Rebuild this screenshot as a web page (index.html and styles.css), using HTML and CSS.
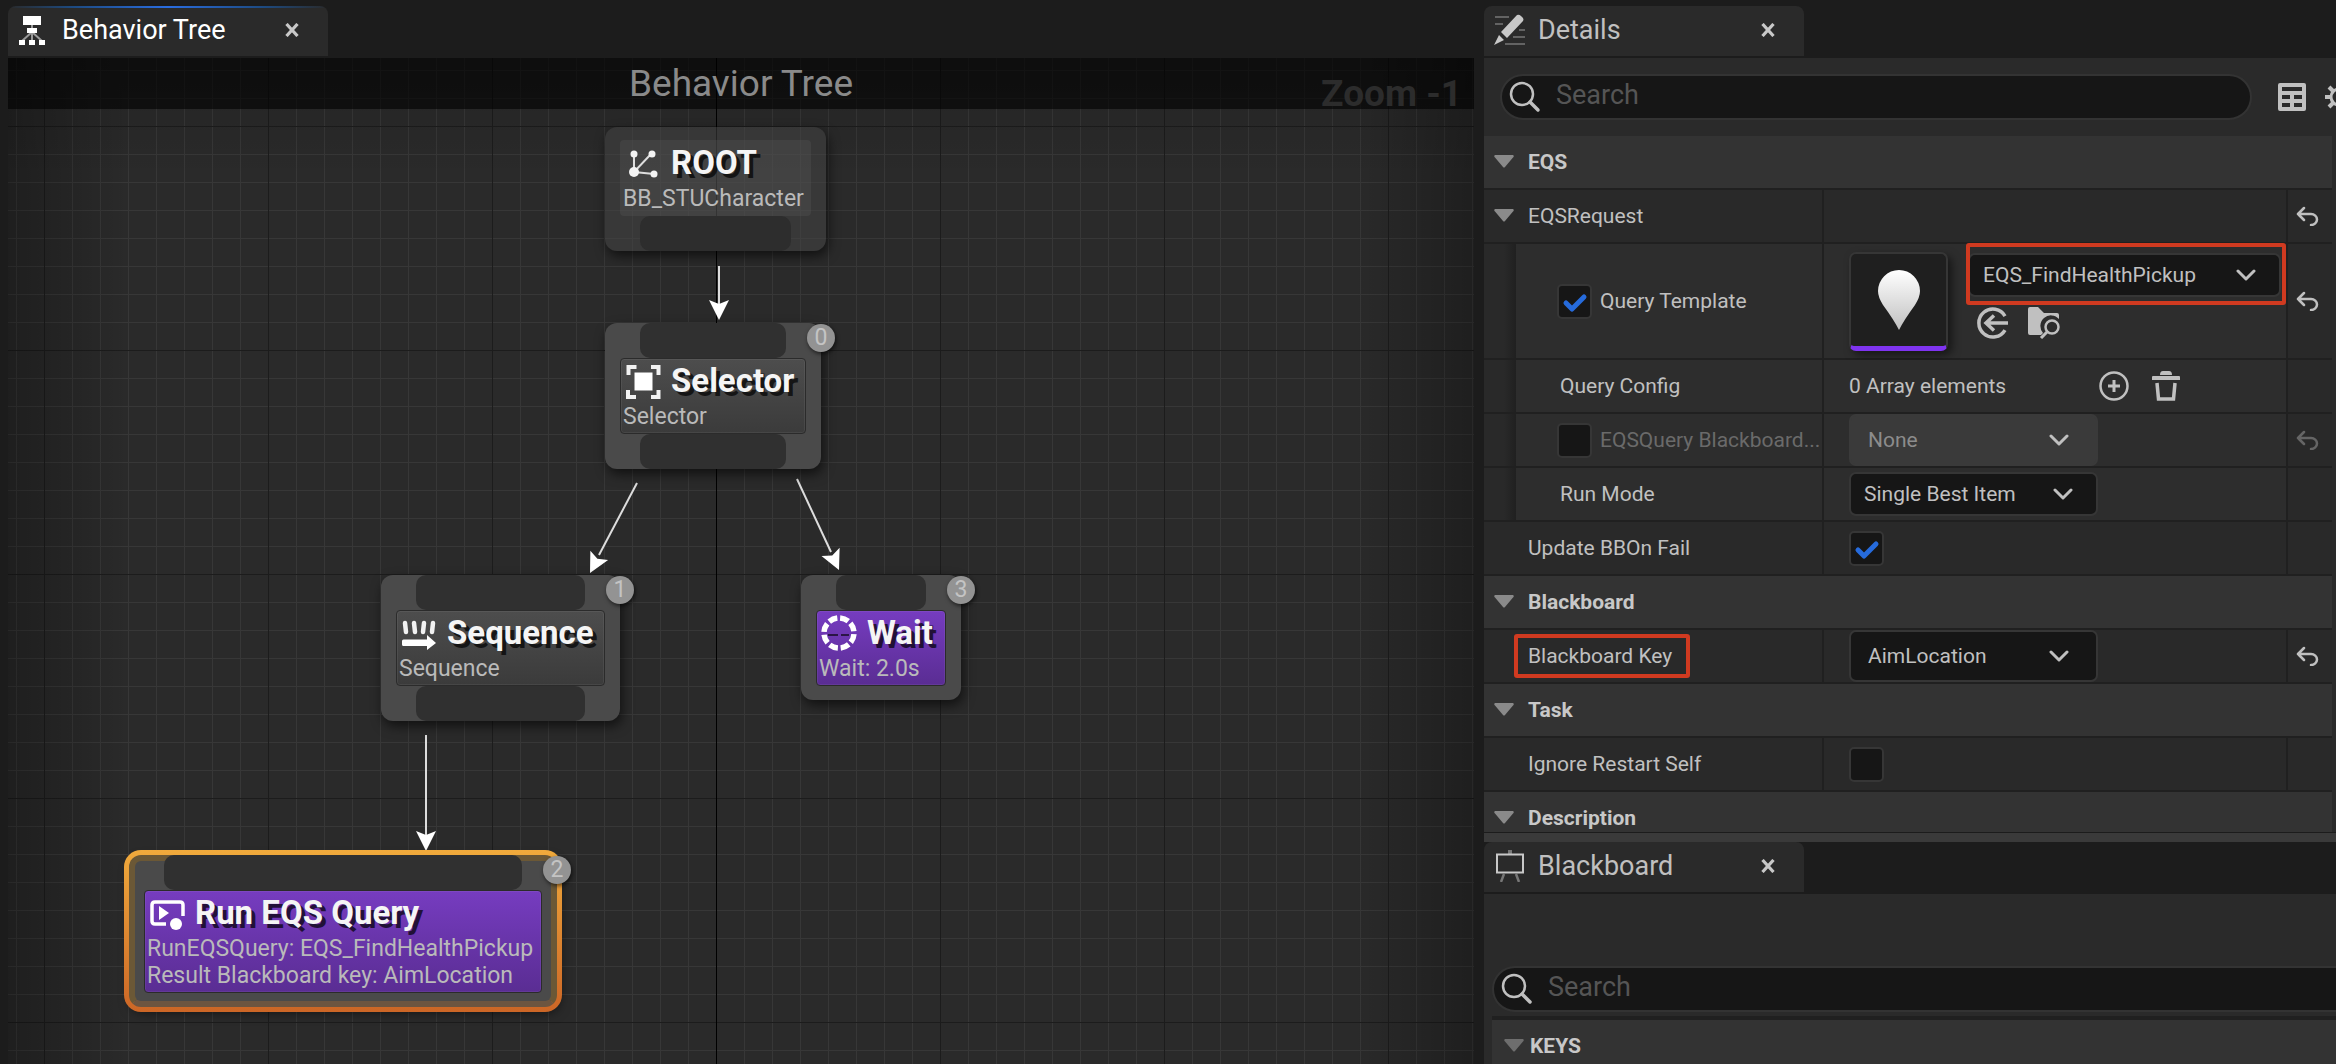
FILE: index.html
```html
<!DOCTYPE html>
<html lang="en">
<head>
  <meta charset="UTF-8">
  <title>Behavior Tree</title>
  <link rel="stylesheet" href="styles.css">
</head>
<body>
  <!-- Shared icons -->
  <svg class="defs" aria-hidden="true">
    <symbol id="i-close" viewBox="0 0 14 14"><path d="M1.500 1L12.500 13M12.500 1L1.500 13" fill="none" stroke="#c8c8c8" stroke-width="3.200"/></symbol>
    <symbol id="i-search" viewBox="0 0 32 32"><circle cx="13" cy="13" r="11" fill="none" stroke="#c0c0c0" stroke-width="2.500"/><path d="M21 21l8 8" stroke="#c0c0c0" stroke-width="3.500" stroke-linecap="round"/></symbol>
    <symbol id="i-reset" viewBox="0 0 24 20"><path d="M8 2L2 8l6 6M2 8h13a6 5.500 0 0 1 0 11" fill="none" stroke="#c0c0c0" stroke-width="2.500" stroke-linecap="round" stroke-linejoin="round"/></symbol>
    <symbol id="i-fold" viewBox="0 0 20 14"><path d="M1 0h18q1.500 1 0 2.500L11 12q-1 1-2 0L1 2.500Q-.5 1 1 0z" fill="currentColor"/></symbol>
  </svg>

  <div class="editor">
    <section class="pane">
      <div class="tabs">
        <div class="tab active">
          <svg class="tab-icon" viewBox="0 0 28 30">
            <path d="M14 8v8M14 17L4 26M14 17v9M14 17l10 9" stroke="#999" stroke-width="2" fill="none"/>
            <path d="M5 1h18v9H5zM9 13h10v5H9zM1 25h6v5H1zM11 25h6v5h-6zM21 25h6v5h-6z" fill="#fff"/>
          </svg>
          <span class="tab-label">Behavior Tree</span>
          <button class="close" aria-label="Close Behavior Tree"><svg><use href="#i-close"/></svg></button>
        </div>
      </div>

      <div class="graph">
        <header class="graph-title">
          <h1>Behavior Tree</h1>
          <span class="zoom">Zoom -1</span>
        </header>

        <svg class="wires" aria-hidden="true">
          <g stroke="#ddd" stroke-width="2">
            <path d="M711 208V246"/>
            <path d="M629 425L591 497"/>
            <path d="M789 421L823 494"/>
            <path d="M418 677V777"/>
          </g>
          <g fill="#fff">
            <path id="head" d="M0 0L-10-20L0-16L10-20z" transform="translate(711 262)"/>
            <use href="#head" transform="translate(582 515) rotate(27.500) translate(-711 -262)"/>
            <use href="#head" transform="translate(831 512) rotate(-25) translate(-711 -262)"/>
            <use href="#head" transform="translate(418 793) translate(-711 -262)"/>
          </g>
        </svg>

        <article class="node root">
          <div class="body">
            <div class="head">
              <svg viewBox="0 0 36 36"><path d="M9 27V8L9 27L27 8M9 27l20 2" fill="none" stroke="#ddd" stroke-width="2"/><g fill="#f2f2f2"><circle cx="9" cy="27" r="5"/><circle cx="9" cy="9" r="3.500"/><circle cx="27" cy="9" r="3.500"/><circle cx="29" cy="29" r="3.500"/></g></svg>
              <h2>ROOT</h2>
            </div>
            <p>BB_STUCharacter</p>
          </div>
          <div class="pin"></div>
        </article>

        <article class="node selector">
          <div class="pin"></div>
          <div class="body">
            <div class="head">
              <svg viewBox="0 0 36 36"><path d="M9.500 9.500h18v18h-18z" fill="#fff"/><path d="M3.500 12V4h8M26 4h7.500v8M33.500 27v7H26M11 34H3v-7" fill="none" stroke="#f2f2f2" stroke-width="4"/></svg>
              <h2>Selector</h2>
            </div>
            <p>Selector</p>
          </div>
          <div class="pin"></div>
          <span class="badge">0</span>
        </article>

        <article class="node sequence">
          <div class="pin"></div>
          <div class="body">
            <div class="head">
              <svg viewBox="0 0 36 36"><path d="M4 8l1 9M13 8l1 9M23 8l-1 9M32 8l-1 9" stroke="#f2f2f2" stroke-width="4.500" stroke-linecap="round"/><path d="M1 26q0-1.500 1.500-1.500H26V20l9 8-9 7v-4H2.500Q1 31 1 29.500z" fill="#fff"/></svg>
              <h2>Sequence</h2>
            </div>
            <p>Sequence</p>
          </div>
          <div class="pin"></div>
          <span class="badge">1</span>
        </article>

        <article class="node task wait">
          <div class="pin"></div>
          <div class="body">
            <div class="head">
              <svg viewBox="0 0 36 36"><path d="M7 20h10M20 20h8" stroke="#2a1545" stroke-width="2"/><circle cx="18" cy="18" r="15" fill="none" stroke="#fff" stroke-width="5.500" pathLength="80" stroke-dasharray="7.500 2.500" stroke-dashoffset="-1"/></svg>
              <h2>Wait</h2>
            </div>
            <p>Wait: 2.0s</p>
          </div>
          <span class="badge">3</span>
        </article>

        <article class="node task run-eqs selected">
          <div class="pin"></div>
          <div class="body">
            <div class="head">
              <svg viewBox="0 0 36 36"><path d="M17 29H6q-3 0-3-3V10q0-3 3-3h25q3 0 3 3v11" fill="none" stroke="#fff" stroke-width="3.500"/><path d="M10 11l10 7-10 7z" fill="#fff"/><circle cx="27" cy="29" r="6" fill="#fff"/></svg>
              <h2>Run EQS Query</h2>
            </div>
            <p>RunEQSQuery: EQS_FindHealthPickup<br>Result Blackboard key: AimLocation</p>
          </div>
          <span class="badge">2</span>
        </article>
      </div>
    </section>

    <div class="side">
      <section class="pane">
        <div class="tabs">
          <div class="tab">
            <svg class="tab-icon wide" viewBox="0 0 32 32">
              <path d="M1 3h14M1 10h8M25 16h6M19 23h12M11 30h20" stroke="#777" stroke-width="1.500"/>
              <path d="M23 1q2-1 4 1l2 2q1 2 0 3L13 24l-6-6zM5 21l5 5-10 5z" fill="#c8c8c8"/>
            </svg>
            <span class="tab-label">Details</span>
            <button class="close" aria-label="Close Details"><svg><use href="#i-close"/></svg></button>
          </div>
        </div>

        <div class="panel">
          <div class="toolbar">
            <label class="search">
              <svg><use href="#i-search"/></svg>
              <input type="text" placeholder="Search" aria-label="Search details">
            </label>
            <button class="tool" aria-label="Property matrix"><svg viewBox="0 0 28 28"><path fill="#c0c0c0" fill-rule="evenodd" d="M2 0h24q2 0 2 2v24q0 2-2 2H2q-2 0-2-2V2q0-2 2-2zM4 4v4h20V4zM4 12v4h8v-4zM16 12v4h8v-4zM4 20v4h8v-4zM16 20v4h8v-4z"/></svg></button>
            <button class="tool" aria-label="Settings"><svg viewBox="0 0 28 28"><circle cx="14" cy="14" r="8" fill="none" stroke="#c0c0c0" stroke-width="3"/><path d="M0 14h6M22 14h6M14 0v6M14 22v6M4 4l4 4M20 20l4 4M4 24l4-4M20 8l4-4" stroke="#c0c0c0" stroke-width="4"/></svg></button>
          </div>

          <div class="rows">
            <h3 class="category"><svg class="fold"><use href="#i-fold"/></svg>EQS</h3>

            <div class="row">
              <div class="name"><svg class="fold"><use href="#i-fold"/></svg>EQSRequest</div>
              <div class="value"></div>
              <div class="reset"><button aria-label="Reset EQSRequest"><svg><use href="#i-reset"/></svg></button></div>
            </div>

            <div class="row child tall">
              <div class="name">
                <input type="checkbox" id="queryTemplate" checked>
                <label for="queryTemplate">Query Template</label>
              </div>
              <div class="value asset">
                <div class="thumb">
                  <svg viewBox="0 0 42 60">
                    <defs><linearGradient id="pinFill" x2="0" y2="1"><stop offset="0" stop-color="#fff"/><stop offset="1" stop-color="#c0c0c0"/></linearGradient></defs>
                    <path d="M21 0a21 21 0 0 1 21 21q0 6-5 14-11 15-16 25-5-10-16-25-5-8-5-14A21 21 0 0 1 21 0z" fill="url(#pinFill)"/>
                  </svg>
                </div>
                <div class="asset-main">
                  <div class="marked asset-pick">
                    <select aria-label="Query Template asset"><option>EQS_FindHealthPickup</option></select>
                  </div>
                  <div class="asset-tools">
                    <button aria-label="Use selected asset"><svg viewBox="0 0 32 32"><path d="M28 9A14 14 0 1 0 28 23M31 16H9M17 8.500L9 16l8 7.500" fill="none" stroke="#c0c0c0" stroke-width="3.500"/></svg></button>
                    <button aria-label="Browse to asset"><svg viewBox="0 0 32 32"><path d="M2 0h8l6 6h13q2 0 2 2v4A10 10 0 0 0 15 26l-2 2H2q-2 0-2-2V2q0-2 2-2z" fill="#c0c0c0"/><circle cx="24" cy="20" r="6.500" fill="none" stroke="#c0c0c0" stroke-width="2.500"/><path d="M19 25l-6 6" stroke="#c0c0c0" stroke-width="3"/></svg></button>
                  </div>
                </div>
              </div>
              <div class="reset"><button aria-label="Reset Query Template"><svg><use href="#i-reset"/></svg></button></div>
            </div>

            <div class="row child">
              <div class="name">Query Config</div>
              <div class="value array">
                <span>0 Array elements</span>
                <button aria-label="Add element"><svg viewBox="0 0 30 30"><circle cx="15" cy="15" r="13.500" fill="none" stroke="#c0c0c0" stroke-width="2.500"/><path d="M15 9v12M9 15h12" stroke="#c0c0c0" stroke-width="3"/></svg></button>
                <button aria-label="Remove all elements"><svg viewBox="0 0 30 30"><path d="M9 4q0-4 3-4h6q3 0 3 4zM1 6q0-1 1-1h26q1 0 1 1v3H1z" fill="#c0c0c0"/><path d="M6 12l1.500 16h15L24 12" fill="none" stroke="#c0c0c0" stroke-width="3.500"/></svg></button>
              </div>
              <div class="reset"></div>
            </div>

            <div class="row child disabled">
              <div class="name">
                <input type="checkbox" id="queryBlackboard">
                <label for="queryBlackboard">EQSQuery Blackboard...</label>
              </div>
              <div class="value"><select class="key" aria-label="EQSQuery Blackboard Key" disabled><option>None</option></select></div>
              <div class="reset"><button aria-label="Reset EQSQuery Blackboard Key" disabled><svg><use href="#i-reset"/></svg></button></div>
            </div>

            <div class="row child">
              <div class="name"><label for="runMode">Run Mode</label></div>
              <div class="value"><select id="runMode"><option>Single Best Item</option></select></div>
              <div class="reset"></div>
            </div>

            <div class="row">
              <div class="name"><label for="updateOnFail">Update BBOn Fail</label></div>
              <div class="value"><input type="checkbox" id="updateOnFail" checked></div>
              <div class="reset"></div>
            </div>

            <h3 class="category"><svg class="fold"><use href="#i-fold"/></svg>Blackboard</h3>

            <div class="row">
              <div class="name"><label class="marked" for="blackboardKey">Blackboard Key</label></div>
              <div class="value"><select class="key" id="blackboardKey"><option>AimLocation</option></select></div>
              <div class="reset"><button aria-label="Reset Blackboard Key"><svg><use href="#i-reset"/></svg></button></div>
            </div>

            <h3 class="category"><svg class="fold"><use href="#i-fold"/></svg>Task</h3>

            <div class="row">
              <div class="name"><label for="ignoreRestart">Ignore Restart Self</label></div>
              <div class="value"><input type="checkbox" id="ignoreRestart"></div>
              <div class="reset"></div>
            </div>

            <h3 class="category"><svg class="fold"><use href="#i-fold"/></svg>Description</h3>
          </div>
        </div>
      </section>

      <div class="splitter"></div>

      <section class="pane">
        <div class="tabs">
          <div class="tab">
            <svg class="tab-icon wide" viewBox="0 0 32 32">
              <path d="M16 0v4" stroke="#777" stroke-width="4"/>
              <path d="M10 24L7 32M22 24l3 8" stroke="#777" stroke-width="2.500"/>
              <path d="M3 4.500h26v18H3z" fill="none" stroke="#c8c8c8" stroke-width="2"/>
            </svg>
            <span class="tab-label">Blackboard</span>
            <button class="close" aria-label="Close Blackboard"><svg><use href="#i-close"/></svg></button>
          </div>
        </div>

        <div class="panel keys-panel">
          <label class="search">
            <svg><use href="#i-search"/></svg>
            <input type="text" placeholder="Search" aria-label="Search keys">
          </label>
          <h3 class="category keys"><svg class="fold"><use href="#i-fold"/></svg>KEYS</h3>
        </div>
      </section>
    </div>
  </div>
</body>
</html>
```

FILE: styles.css
```css
* {
  box-sizing: border-box;
}
body {
  margin: 0;
  background: #1c1c1c;
  color: #c0c0c0;
  font-family: Roboto, "Liberation Sans", sans-serif;
  font-size: 21px;
}
h1, h2, h3, p {
  margin: 0;
}
button {
  display: flex;
  padding: 0;
  border: none;
  background: none;
  cursor: pointer;
}
.defs {
  position: absolute;
  width: 0;
  height: 0;
}

/* Overall layout: graph on the left, details and blackboard on the right */
.editor {
  display: grid;
  grid-template-columns: minmax(0, 1466fr) minmax(0, 852fr);
  gap: 10px;
  height: 100vh;
  padding: 6px 0 0 8px;
  overflow: hidden;
}
.side {
  display: grid;
  grid-template-rows: minmax(0, 826fr) 10px minmax(0, 222fr);
  min-height: 0;
}
.pane {
  display: flex;
  flex-direction: column;
  min-width: 0;
  min-height: 0;
  overflow: hidden;
}
.splitter {
  background: #3a3a3a;
  border-top: 1px solid #1c1c1c;
}

/* Tabs */
.tabs {
  display: flex;
  flex: none;
  padding-bottom: 2px;
}
.tab {
  display: flex;
  align-items: center;
  width: 320px;
  height: 50px;
  padding: 0 29px 3px 10px;
  border-radius: 8px 8px 0 0;
  background: #2a2a2a;
  font-size: 27px;
}
.tab.active {
  color: #fff;
  background: linear-gradient(90deg, #2a2a2a, #1d4a80 20%, #2a6de0 50%, #1d4a80 80%, #2a2a2a) 0 0 / 100% 2px no-repeat #2a2a2a;
}
.tab-icon {
  width: 28px;
  height: 30px;
  margin-right: 16px;
}
.tab-icon.wide {
  width: 32px;
  height: 32px;
  margin-right: 12px;
}
.tab-label {
  flex: 1;
}
.close svg {
  width: 14px;
  height: 14px;
}

/* Graph canvas */
.graph {
  position: relative;
  flex: 1;
  overflow: hidden;
  background:
    linear-gradient(#000, #000) 708px 0 / 1px 100% no-repeat,
    linear-gradient(90deg, rgba(0,0,0,0.28), transparent 120px, transparent calc(100% - 120px), rgba(0,0,0,0.28)),
    linear-gradient(rgba(0,0,0,0.15), transparent 120px),
    linear-gradient(90deg, #1c1c1c 1px, transparent 1px) 36px 0 / 224px 224px,
    linear-gradient(#1c1c1c 1px, transparent 1px) 0 68px / 224px 224px,
    linear-gradient(90deg, #373737 1px, transparent 1px) 8px 0 / 28px 28px,
    linear-gradient(#373737 1px, transparent 1px) 0 12px / 28px 28px,
    #2a2a2a;
}
.graph-title {
  position: relative;
  height: 51px;
  background: rgba(0,0,0,0.6);
  text-align: center;
}
.graph-title h1 {
  font-size: 37px;
  font-weight: 400;
  line-height: 51px;
  color: #8a8a8a;
}
.zoom {
  position: absolute;
  right: 12px;
  top: 12px;
  font-size: 37px;
  font-weight: 700;
  line-height: 48px;
  color: #2c2c2c;
}
.wires {
  position: absolute;
  inset: 0;
  width: 100%;
  height: 100%;
}

/* Nodes */
.node {
  position: absolute;
  padding: 0 15px;
  border-radius: 12px;
  background: #4a4a4a;
  box-shadow: 2px 5px 12px rgba(0,0,0,0.6);
}
.pin {
  height: 35px;
  margin: 0 20px;
  border-radius: 10px;
  background: #303030;
}
.body {
  padding: 1px 2px 3px;
  border: 1px solid #2b2b2b;
  border-radius: 4px;
  background: linear-gradient(#4d4d4d, #3b3b3b);
  box-shadow: inset 0 0 0 1px rgba(255,255,255,0.06);
}
.head {
  display: flex;
  align-items: center;
  gap: 10px;
  height: 43px;
  padding: 0 0 2px 2px;
}
.head svg {
  flex: none;
  width: 36px;
  height: 36px;
}
.head h2 {
  font-size: 33px;
  font-weight: 700;
  line-height: 40px;
  color: #f5f5f5;
  text-shadow: 4px 4px 0 rgba(0,0,0,0.7);
  white-space: nowrap;
}
.body p {
  font-size: 23px;
  line-height: 27px;
  color: #bababa;
  white-space: nowrap;
}
.badge {
  position: absolute;
  top: 1px;
  right: -14px;
  width: 28px;
  height: 28px;
  border-radius: 50%;
  background: #939393;
  box-shadow: 1px 2px 4px rgba(0,0,0,0.6);
  color: #c4c4c4;
  font-size: 23px;
  line-height: 27px;
  text-align: center;
}
.task .body {
  background: linear-gradient(#763cc0, #5a2d93);
}
.task {
  padding-bottom: 14px;
}
.root {
  left: 597px;
  top: 69px;
  width: 221px;
  padding-top: 13px;
  background: rgba(70,70,70,0.5);
}
.root .body {
  border-color: transparent;
  background: rgba(90,90,90,0.3);
  box-shadow: none;
}
.root .pin {
  background: #2d2d2d;
}
.selector {
  left: 597px;
  top: 265px;
  width: 216px;
}
.sequence {
  left: 373px;
  top: 517px;
  width: 239px;
}
.wait {
  left: 793px;
  top: 517px;
  width: 160px;
}
.run-eqs {
  left: 121px;
  top: 797px;
  width: 428px;
}

/* Orange outline of the selected node */
.selected {
  z-index: 0;
  background: none;
}
.selected::before {
  content: "";
  position: absolute;
  inset: -5px;
  border-radius: 17px;
  background: linear-gradient(#f0aa3c, #cc6626);
  z-index: -1;
}
.selected::after {
  content: "";
  position: absolute;
  inset: 0;
  border: 6px solid #6b5836;
  border-bottom-color: #6d5540;
  border-radius: 12px;
  background: #4a4a4a;
  z-index: -1;
}

/* Details panel */
.panel {
  flex: 1;
  min-height: 0;
  background: #2a2a2a;
}
.toolbar {
  display: flex;
  align-items: center;
  height: 78px;
  margin-right: -17px;
  padding-left: 16px;
}
.search {
  display: flex;
  flex: 1;
  align-items: center;
  gap: 15px;
  height: 46px;
  padding: 0 7px;
  border: 2px solid #333;
  border-radius: 23px;
  background: #161616;
}
.search svg {
  flex: none;
  width: 32px;
  height: 32px;
}
.search input {
  flex: 1;
  min-width: 0;
  padding: 0 0 4px;
  border: none;
  outline: none;
  background: none;
  color: #c0c0c0;
  font-family: inherit;
  font-size: 27px;
}
.search input::placeholder {
  color: #555;
}
.tool svg {
  width: 28px;
  height: 28px;
}
.tool {
  margin-left: 26px;
}
.tool + .tool {
  margin-left: 19px;
}
.rows {
  display: grid;
  gap: 2px;
  margin-right: 4px;
  background: #202020;
}
.category {
  display: flex;
  align-items: center;
  gap: 14px;
  height: 52px;
  padding-left: 10px;
  background: #333;
  font-size: 21px;
  font-weight: 700;
  color: #c8c8c8;
}
.fold {
  flex: none;
  width: 20px;
  height: 14px;
  color: #8a8a8a;
}
.row {
  display: grid;
  grid-template-columns: minmax(0, 338fr) minmax(0, 462fr) 44px;
  gap: 2px;
  height: 52px;
}
.row > div {
  display: flex;
  align-items: center;
  background: #292929;
}
.row .name {
  gap: 8px;
  padding-left: 44px;
  white-space: nowrap;
}
.row .name .fold {
  margin-left: -34px;
  margin-right: 6px;
}
.row .value {
  padding-left: 25px;
}
.row .reset {
  padding-left: 8px;
}
.reset svg {
  width: 24px;
  height: 20px;
}
.row.child > div {
  background: #2d2d2d;
}
.row.child .name {
  padding-left: 76px;
  background: linear-gradient(90deg, #292929 20px, #202020 32px, #2d2d2d 32px);
}
.row.child .name:has(input) {
  padding-left: 73px;
}
.row.child .reset {
  background: #292929;
}
.row.tall {
  height: 114px;
}
.disabled .name {
  color: #6a6a6a;
}
.disabled .reset svg {
  opacity: 0.4;
}

/* Form controls */
input[type="checkbox"] {
  appearance: none;
  flex: none;
  width: 35px;
  height: 35px;
  margin: 0;
  border: 2px solid #363636;
  border-radius: 5px;
  background: #161616;
}
input[type="checkbox"]:checked {
  background: #161616 url("data:image/svg+xml,%3Csvg xmlns='http://www.w3.org/2000/svg' viewBox='0 0 31 31'%3E%3Cpath d='M7 17l6 6L25 11' fill='none' stroke='%23266bdc' stroke-width='5' stroke-linecap='round' stroke-linejoin='round'/%3E%3C/svg%3E") center / 31px 31px no-repeat;
}
select {
  appearance: none;
  width: 249px;
  height: 44px;
  padding: 0 50px 0 13px;
  border: 2px solid #363636;
  border-radius: 7px;
  background: #161616 url("data:image/svg+xml,%3Csvg xmlns='http://www.w3.org/2000/svg' viewBox='0 0 20 12'%3E%3Cpath d='M2 2l8 8 8-8' fill='none' stroke='%23c0c0c0' stroke-width='3' stroke-linecap='round' stroke-linejoin='round'/%3E%3C/svg%3E") right 23px center / 20px 12px no-repeat;
  color: #c0c0c0;
  font-family: inherit;
  font-size: 21px;
}
select.key {
  height: 52px;
  padding-left: 17px;
  background-position: right 27px center;
}
select:disabled {
  border-color: #3a3a3a;
  background-color: #3a3a3a;
  color: #8c8c8c;
  opacity: 1;
}

/* Asset picker */
.asset {
  gap: 26px;
}
.thumb {
  display: flex;
  flex: none;
  justify-content: center;
  align-items: center;
  width: 99px;
  height: 99px;
  border: 2px solid #363636;
  border-bottom: 5px solid #7f34f0;
  border-radius: 7px;
  background: #1f1f1f;
  box-shadow: 4px 4px 8px rgba(0,0,0,0.5);
}
.thumb svg {
  width: 42px;
  height: 60px;
}
.asset-main {
  flex: 1;
  align-self: flex-start;
}
.asset-pick {
  margin-top: 9px;
  margin-right: 5px;
  margin-left: -6px;
}
.asset-pick select {
  display: block;
  width: 100%;
}
.asset-tools {
  display: flex;
  gap: 19px;
  margin-top: 10px;
  padding-left: 3px;
}
.asset-tools svg {
  width: 32px;
  height: 32px;
}
.array span {
  width: 250px;
}
.array button + button {
  margin-left: 22px;
}
.array svg {
  width: 30px;
  height: 30px;
}

/* Red marker boxes */
.marked {
  position: relative;
}
.marked::after {
  content: "";
  position: absolute;
  inset: -10px -18px -10px -14px;
  border: 4px solid #d03a20;
  border-radius: 3px;
}
.asset-pick::after {
  inset: -10px -5px -8px -2px;
  pointer-events: none;
}

/* Blackboard panel */
.keys-panel {
  padding: 72px 0 0 8px;
}
.keys-panel .search {
  margin-right: -24px;
  margin-bottom: 4px;
}
.keys {
  gap: 6px;
  padding-left: 12px;
  border-top: 4px solid #202020;
  height: 56px;
}
.keys .fold {
  color: #6e6e6e;
}
```
